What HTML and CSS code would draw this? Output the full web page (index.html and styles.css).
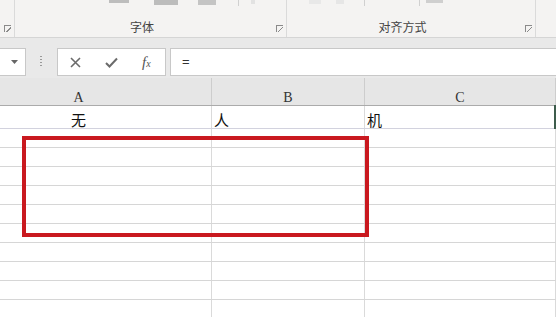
FILE: index.html
```html
<!DOCTYPE html>
<html lang="zh-CN">
<head>
    <meta charset="UTF-8">
    <title>Excel</title>
    <link rel="stylesheet" href="styles.css">
</head>
<body>
    <!-- Ribbon (bottom of the groups) -->
    <div class="ribbon">
        <div class="group group-stub">
            <span class="launcher"></span>
        </div>
        <div class="group group-font">
            <div class="tools">
                <span class="tool t1"></span>
                <span class="tool t2"></span>
                <span class="tool t3"></span>
                <span class="vline v1"></span>
                <span class="tool t4"></span>
            </div>
            <div class="group-label">字体</div>
            <span class="launcher"></span>
        </div>
        <div class="group group-align">
            <div class="tools">
                <span class="tool t5"></span>
                <span class="tool t6"></span>
                <span class="vline v2"></span>
                <span class="vline v3"></span>
                <span class="tool t7"></span>
            </div>
            <div class="group-label">对齐方式</div>
            <span class="launcher"></span>
        </div>
        <div class="group group-rest"></div>
    </div>

    <!-- Formula bar -->
    <div class="formula-bar">
        <div class="name-box">
            <svg width="7" height="4" viewBox="0 0 7 4"><path d="M0 0H7L3.5 4Z" fill="#666"/></svg>
        </div>
        <div class="grip"></div>
        <div class="fx-buttons">
            <svg class="btn-icon" width="11" height="11" viewBox="0 0 11 11"><path d="M1 1L10 10M10 1L1 10" stroke="#6b6b6b" stroke-width="1.6"/></svg>
            <svg class="btn-icon" width="13" height="11" viewBox="0 0 13 11"><path d="M1 6L4.5 9.5L12 1.5" stroke="#6b6b6b" stroke-width="2" fill="none"/></svg>
            <span class="fx">f<sub>x</sub></span>
        </div>
        <div class="formula-input">=</div>
    </div>

    <!-- Sheet -->
    <div class="sheet">
        <div class="col-header">
            <div class="hcell col-a">A</div>
            <div class="hcell">B</div>
            <div class="hcell">C</div>
        </div>
        <div class="row row-first">
            <div class="cell col-a center">无</div>
            <div class="cell">人</div>
            <div class="cell">机</div>
        </div>
        <div class="row"><div class="cell"></div><div class="cell"></div><div class="cell"></div></div>
        <div class="row"><div class="cell"></div><div class="cell"></div><div class="cell"></div></div>
        <div class="row"><div class="cell"></div><div class="cell"></div><div class="cell"></div></div>
        <div class="row"><div class="cell"></div><div class="cell"></div><div class="cell"></div></div>
        <div class="row"><div class="cell"></div><div class="cell"></div><div class="cell"></div></div>
        <div class="row"><div class="cell"></div><div class="cell"></div><div class="cell"></div></div>
        <div class="row"><div class="cell"></div><div class="cell"></div><div class="cell"></div></div>
        <div class="row"><div class="cell"></div><div class="cell"></div><div class="cell"></div></div>
        <div class="row"><div class="cell"></div><div class="cell"></div><div class="cell"></div></div>
        <div class="row"><div class="cell"></div><div class="cell"></div><div class="cell"></div></div>

        <!-- overlays -->
        <div class="active-edge"></div>
        <div class="highlight-box"></div>
    </div>
</body>
</html>
```

FILE: styles.css
```css
/* Global */
* {
    margin: 0;
    padding: 0;
    box-sizing: border-box;
}

body {
    width: 556px;
    height: 317px;
    overflow: hidden;
    background: #fff;
    font-family: "Noto Sans CJK SC", "Noto Sans", sans-serif;
    color: #222;
    position: relative;
}

/* Ribbon */
.ribbon {
    display: flex;
    height: 38px;
    background: #f4f3f2;
    border-bottom: 1px solid #d5d5d5;
}

.group {
    position: relative;
    height: 37px;
    border-right: 1px solid #dadada;
}

.group-stub { width: 15px; }
.group-font { width: 272px; }
.group-align { width: 249px; }
.group-rest { flex: 1; border-right: none; }

.tools {
    display: flex;
    align-items: flex-start;
    height: 20px;
}

.tool {
    height: 4px;
    background: #c9c9c9;
}

.vline {
    width: 1px;
    height: 6px;
    background: #d0d0d0;
}

.t1 { width: 20px; margin-left: 94px; background: #bdbdbd; height: 3px; }
.t2 { width: 24px; margin-left: 25px; background: #bcbcbc; height: 5px; }
.t3 { width: 18px; margin-left: 20px; background: #c4c4c4; height: 5px; }
.v1 { margin-left: 22px; }
.t4 { width: 4px; margin-left: 12px; background: #e2e2e2; }
.t5 { width: 12px; margin-left: 22px; background: #e8e8e8; }
.t6 { width: 8px; margin-left: 15px; background: #e6e6e6; }
.v2 { margin-left: 20px; }
.v3 { margin-left: 54px; }
.t7 { width: 17px; margin-left: 6px; background: #cfcfcf; height: 3px; }

.group-label {
    font-size: 12px;
    line-height: 14px;
    color: #444;
    text-align: center;
    padding-right: 17px;
}

.launcher {
    position: absolute;
    right: 3px;
    bottom: 5px;
    width: 7px;
    height: 7px;
    border-left: 1px solid #8a8a8a;
    border-top: 1px solid #8a8a8a;
}

.launcher::after {
    content: "";
    position: absolute;
    left: 1px;
    top: 1px;
    width: 5px;
    height: 5px;
    background: linear-gradient(to top right, transparent 45%, #8a8a8a 45%, #8a8a8a 60%, transparent 60%);
    transform: rotate(90deg);
}

.group-stub .launcher { right: auto; left: 4px; }

/* Formula bar */
.formula-bar {
    display: flex;
    align-items: flex-start;
    height: 40px;
    padding-top: 10px;
    background: #e9e9e9;
}

.name-box {
    width: 26px;
    height: 28px;
    background: #fff;
    border: 1px solid #c8c8c8;
    border-left: none;
    display: flex;
    align-items: center;
    justify-content: flex-end;
    padding-right: 7px;
}

.grip {
    width: 2px;
    height: 12px;
    margin: 8px 0 0 14px;
    background: repeating-linear-gradient(to bottom, #9a9a9a 0 1px, transparent 1px 3px);
}

.fx-buttons {
    width: 109px;
    height: 28px;
    margin-left: 15px;
    background: #fff;
    border: 1px solid #c8c8c8;
    display: flex;
    align-items: center;
    padding-left: 12px;
    gap: 24px;
}

.fx {
    font-family: "Liberation Serif", serif;
    font-style: italic;
    font-size: 15px;
    color: #555;
    line-height: 1;
}

.fx sub {
    font-size: 10px;
    vertical-align: 0;
}

.formula-input {
    flex: 1;
    height: 28px;
    margin-left: 4px;
    background: #fff;
    border: 1px solid #c8c8c8;
    border-right: none;
    font-family: "Liberation Sans", sans-serif;
    font-size: 13px;
    line-height: 26px;
    padding-left: 11px;
    color: #333;
}

/* Sheet */
.sheet {
    position: relative;
}

.col-header,
.row {
    display: grid;
    grid-template-columns: 212px 153px 191px;
}

.col-header {
    height: 28px;
    background: #e6e6e6;
    border-bottom: 1px solid #ababab;
}

.hcell {
    font-family: "Liberation Serif", serif;
    font-size: 14px;
    text-align: center;
    color: #333;
    line-height: 14px;
    padding-top: 13px;
    border-right: 1px solid #cdcdcd;
}

.col-a {
    padding-right: 54px;
}

.row {
    height: 19px;
    border-bottom: 1px solid #d6d6d6;
}

.row-first {
    height: 23px;
    border-bottom-color: #d2d2de;
}

.cell {
    border-right: 1px solid #dadada;
    font-size: 15px;
    line-height: 15px;
    padding: 6px 0 0 2px;
    color: #111;
}

.cell.center {
    text-align: center;
    padding-left: 0;
    padding-right: 54px;
}

.active-edge {
    position: absolute;
    left: 554px;
    top: 27px;
    width: 2px;
    height: 24px;
    background: #3d5c4c;
}

.highlight-box {
    position: absolute;
    left: 22px;
    top: 58px;
    width: 347px;
    height: 101px;
    border: 4px solid #c9191f;
}
```
